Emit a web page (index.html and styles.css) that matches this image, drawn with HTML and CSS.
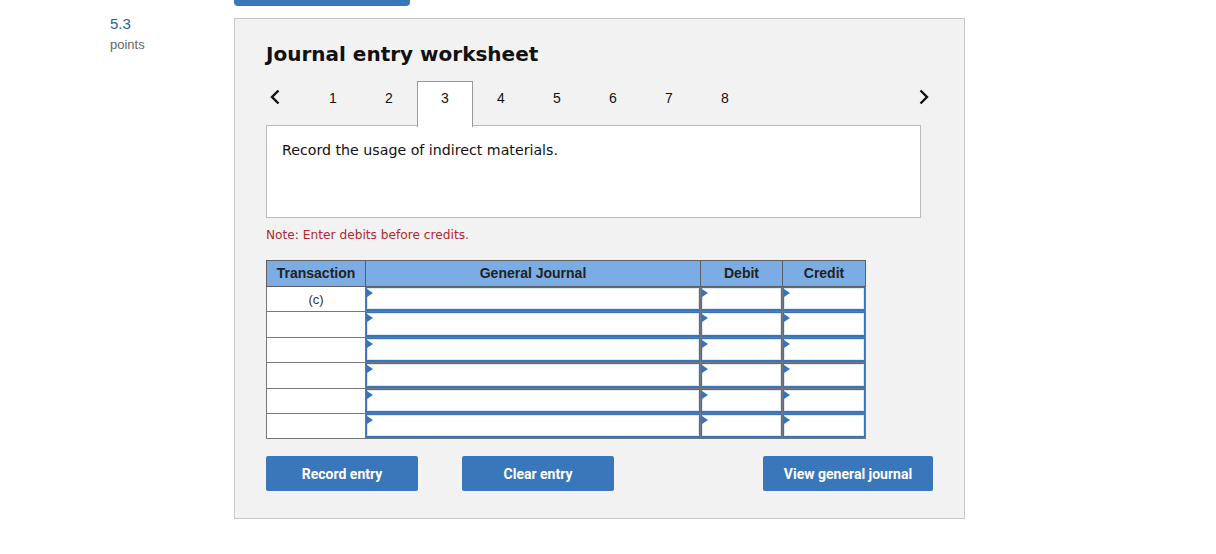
FILE: index.html
```html
<!DOCTYPE html>
<html>
<head>
<meta charset="utf-8">
<link rel="stylesheet" href="styles.css">
</head>
<body>
<div class="page">
  <div class="score">
    <div class="score-value">5.3</div>
    <div class="score-label">points</div>
  </div>
  <div class="main">
    <div class="top-btn"></div>
    <div class="panel">
      <h1 class="title">Journal entry worksheet</h1>
      <div class="tabs">
        <div class="arrow arrow-left">
          <svg width="12" height="16" viewBox="0 0 12 16"><path d="M9.5 1.5 L3 8 L9.5 14.5" fill="none" stroke="#111" stroke-width="2.4"/></svg>
        </div>
        <div class="tab">1</div>
        <div class="tab">2</div>
        <div class="tab active">3</div>
        <div class="tab">4</div>
        <div class="tab">5</div>
        <div class="tab">6</div>
        <div class="tab">7</div>
        <div class="tab">8</div>
        <div class="tab-spacer"></div>
        <div class="arrow arrow-right">
          <svg width="12" height="16" viewBox="0 0 12 16"><path d="M2.5 1.5 L9 8 L2.5 14.5" fill="none" stroke="#111" stroke-width="2.4"/></svg>
        </div>
      </div>
      <div class="prompt">Record the usage of indirect materials.</div>
      <div class="note">Note: Enter debits before credits.</div>
      <table class="journal">
        <thead>
          <tr>
            <th class="c-trans">Transaction</th>
            <th class="c-acct">General Journal</th>
            <th class="c-debit">Debit</th>
            <th class="c-credit">Credit</th>
          </tr>
        </thead>
        <tbody>
          <tr>
            <td class="trans">(c)</td>
            <td class="field"><div class="inp"></div></td>
            <td class="field"><div class="inp"></div></td>
            <td class="field"><div class="inp"></div></td>
          </tr>
          <tr>
            <td class="trans"></td>
            <td class="field"><div class="inp"></div></td>
            <td class="field"><div class="inp"></div></td>
            <td class="field"><div class="inp"></div></td>
          </tr>
          <tr>
            <td class="trans"></td>
            <td class="field"><div class="inp"></div></td>
            <td class="field"><div class="inp"></div></td>
            <td class="field"><div class="inp"></div></td>
          </tr>
          <tr>
            <td class="trans"></td>
            <td class="field"><div class="inp"></div></td>
            <td class="field"><div class="inp"></div></td>
            <td class="field"><div class="inp"></div></td>
          </tr>
          <tr>
            <td class="trans"></td>
            <td class="field"><div class="inp"></div></td>
            <td class="field"><div class="inp"></div></td>
            <td class="field"><div class="inp"></div></td>
          </tr>
          <tr>
            <td class="trans"></td>
            <td class="field"><div class="inp"></div></td>
            <td class="field"><div class="inp"></div></td>
            <td class="field"><div class="inp"></div></td>
          </tr>
        </tbody>
      </table>
      <div class="actions">
        <button class="btn btn-record">Record entry</button>
        <button class="btn btn-clear">Clear entry</button>
        <button class="btn btn-view">View general journal</button>
      </div>
    </div>
  </div>
</div>
</body>
</html>
```
FILE: styles.css
```css
* { box-sizing: border-box; }
html, body { margin: 0; padding: 0; background: #fff; }
body { font-family: "Liberation Sans", Arial, sans-serif; color: #222; }

.page {
  display: flex;
  padding-left: 110px;
}

.score {
  width: 124px;
  padding-top: 15px;
}
.score-value {
  font-size: 15px;
  line-height: 18px;
  color: #2f5d99;
}
.score-label {
  font-size: 13px;
  line-height: 16px;
  margin-top: 4px;
  color: #666;
}

.main {
  width: 731px;
}
.top-btn {
  width: 176px;
  height: 6px;
  background: #3a77ba;
  border-radius: 0 0 4px 4px;
}
.panel {
  margin-top: 12px;
  height: 501px;
  background: #f2f2f2;
  border: 1px solid #c8c8c8;
  padding: 22px 31px 0 31px;
}

.title {
  margin: 0;
  font-family: "DejaVu Sans", Verdana, sans-serif;
  font-weight: bold;
  font-size: 20px;
  line-height: 26px;
  color: #111;
}

.tabs {
  display: flex;
  align-items: flex-start;
  height: 45px;
  margin-top: 14px;
  width: 668px;
}
.arrow {
  width: 39px;
  height: 45px;
  padding-top: 8px;
}
.arrow-left { padding-left: 3px; }
.arrow-right { width: 16px; }
.tab {
  width: 56px;
  height: 45px;
  text-align: center;
  font-size: 14px;
  line-height: 16px;
  padding-top: 9px;
  color: #111;
}
.tab.active {
  background: #fff;
  border: 1px solid #999;
  border-bottom: none;
  position: relative;
  z-index: 1;
  height: 46px;
  margin-bottom: -1px;
  padding-top: 8px;
}
.tab-spacer { flex: 1; }

.prompt {
  width: 655px;
  height: 93px;
  background: #fff;
  border: 1px solid #bbb;
  margin-top: -1px;
  padding: 15px 15px;
  font-family: "DejaVu Sans", Verdana, sans-serif;
  font-size: 14.2px;
  line-height: 18px;
  color: #111;
}

.note {
  margin-top: 10px;
  font-family: "DejaVu Sans", Verdana, sans-serif;
  font-size: 12.2px;
  line-height: 14px;
  color: #b3282d;
}

.journal {
  margin-top: 18px;
  border-collapse: collapse;
  width: 599px;
  table-layout: fixed;
}
.journal th {
  background: #7bade4;
  border: 1px solid #5e5e5e;
  height: 26px;
  font-size: 14px;
  line-height: 16px;
  font-weight: bold;
  color: #222;
  padding: 0 0 1px 0;
  text-align: center;
}
.c-trans { width: 99px; }
.c-acct { width: 335px; }
.c-debit { width: 82px; }
.c-credit { width: 83px; }

.journal td {
  border: 1px solid #777;
  height: 25.4px;
  padding: 0;
  background: #fff;
}
.journal td.trans {
  text-align: center;
  vertical-align: top;
  font-size: 13px;
  line-height: 15px;
  padding-top: 5px;
  color: #333;
}
.journal td.field {
  position: relative;
  padding: 0;
}
.inp {
  height: 24.4px;
  border: 1px solid #3a73b7;
  border-bottom-width: 2px;
  box-shadow: inset 0 0 0 1px #dce8f6;
  background: #fff;
}
.journal td.field::before {
  content: "";
  position: absolute;
  left: 1px;
  top: 2px;
  width: 0;
  height: 0;
  border-top: 4px solid transparent;
  border-bottom: 4px solid transparent;
  border-left: 6px solid #3a73b7;
}

.actions {
  display: flex;
  margin-top: 17px;
  width: 667px;
}
.btn {
  height: 35px;
  border: none;
  border-radius: 2px;
  background: #3a77ba;
  color: #fff;
  font-family: Roboto, "Liberation Sans", Arial, sans-serif;
  font-weight: bold;
  font-size: 14px;
  padding: 0;
  cursor: pointer;
}
.btn-record { width: 152px; }
.btn-clear { width: 152px; margin-left: 44px; }
.btn-view { width: 170px; margin-left: auto; }
```
